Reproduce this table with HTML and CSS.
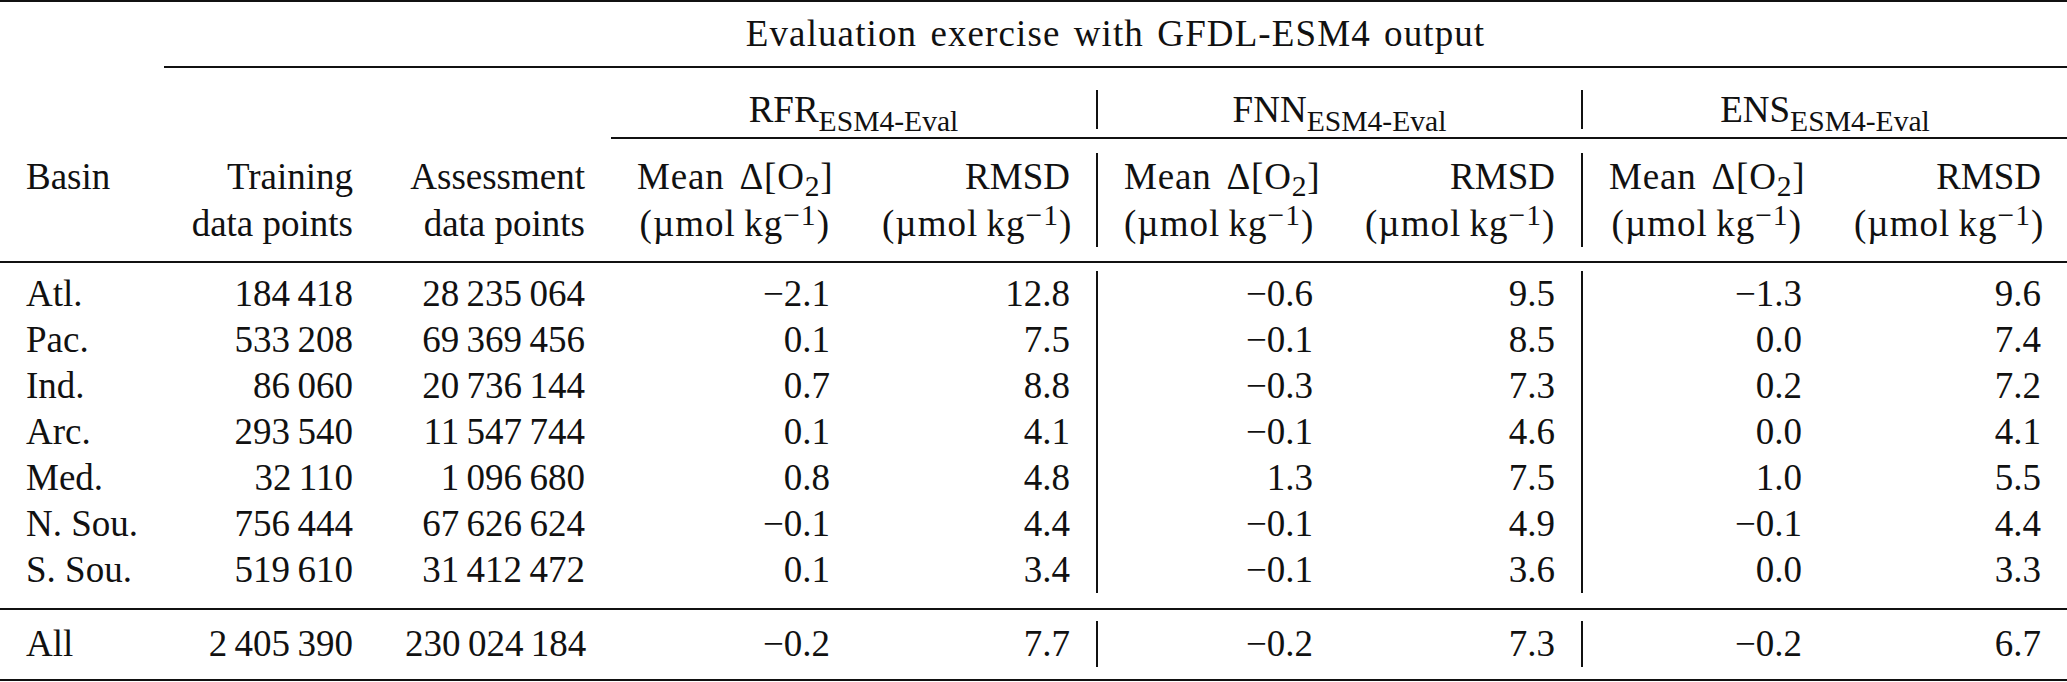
FILE: index.html
```html
<!DOCTYPE html>
<html lang="en">
<head>
<meta charset="utf-8">
<title>Evaluation exercise with GFDL-ESM4 output</title>
<link rel="stylesheet" href="styles.css">
</head>
<body>
<table class="tbl">
  <colgroup>
    <col class="c1"><col class="c2"><col class="c3"><col class="c4"><col class="c5"><col class="c6"><col class="c7"><col class="c8"><col class="c9">
  </colgroup>
  <tbody>
    <tr class="titlerow">
      <td class="top"></td>
      <td colspan="8" class="title top rule">Evaluation exercise with GFDL-ESM4 output</td>
    </tr>
    <tr class="sp"><td colspan="9"><div class="g22"></div></td></tr>
    <tr class="models">
      <td colspan="3"></td>
      <td colspan="2" class="model">RFR<sub>ESM4-Eval</sub></td>
      <td colspan="2" class="model sep">FNN<sub>ESM4-Eval</sub></td>
      <td colspan="2" class="model sep">ENS<sub>ESM4-Eval</sub></td>
    </tr>
    <tr class="sp"><td colspan="3"><div class="g8"></div></td><td colspan="6" class="rule"><div class="g8"></div></td></tr>
    <tr class="sp"><td colspan="9"><div class="g14"></div></td></tr>
    <tr class="head">
      <td class="l">Basin</td>
      <td>Training<br>data points</td>
      <td>Assessment<br>data points</td>
      <td><span class="m">Mean Δ[O<sub>2</sub>]</span><br><span class="u">(µmol&#8201;kg<sup>−1</sup>)</span></td>
      <td>RMSD<br><span class="u">(µmol&#8201;kg<sup>−1</sup>)</span></td>
      <td class="sep"><span class="m">Mean Δ[O<sub>2</sub>]</span><br><span class="u">(µmol&#8201;kg<sup>−1</sup>)</span></td>
      <td>RMSD<br><span class="u">(µmol&#8201;kg<sup>−1</sup>)</span></td>
      <td class="sep"><span class="m">Mean Δ[O<sub>2</sub>]</span><br><span class="u">(µmol&#8201;kg<sup>−1</sup>)</span></td>
      <td>RMSD<br><span class="u">(µmol&#8201;kg<sup>−1</sup>)</span></td>
    </tr>
    <tr class="sp"><td colspan="9" class="rule"><div class="g14"></div></td></tr>
    <tr class="sp"><td colspan="9"><div class="g8"></div></td></tr>
    <tr class="row">
      <td class="l">Atl.</td><td>184&#8201;418</td><td>28&#8201;235&#8201;064</td>
      <td>−2.1</td><td>12.8</td><td class="sep">−0.6</td><td>9.5</td><td class="sep">−1.3</td><td>9.6</td>
    </tr>
    <tr class="row">
      <td class="l">Pac.</td><td>533&#8201;208</td><td>69&#8201;369&#8201;456</td>
      <td>0.1</td><td>7.5</td><td class="sep">−0.1</td><td>8.5</td><td class="sep">0.0</td><td>7.4</td>
    </tr>
    <tr class="row">
      <td class="l">Ind.</td><td>86&#8201;060</td><td>20&#8201;736&#8201;144</td>
      <td>0.7</td><td>8.8</td><td class="sep">−0.3</td><td>7.3</td><td class="sep">0.2</td><td>7.2</td>
    </tr>
    <tr class="row">
      <td class="l">Arc.</td><td>293&#8201;540</td><td>11&#8201;547&#8201;744</td>
      <td>0.1</td><td>4.1</td><td class="sep">−0.1</td><td>4.6</td><td class="sep">0.0</td><td>4.1</td>
    </tr>
    <tr class="row">
      <td class="l">Med.</td><td>32&#8201;110</td><td>1&#8201;096&#8201;680</td>
      <td>0.8</td><td>4.8</td><td class="sep">1.3</td><td>7.5</td><td class="sep">1.0</td><td>5.5</td>
    </tr>
    <tr class="row">
      <td class="l">N. Sou.</td><td>756&#8201;444</td><td>67&#8201;626&#8201;624</td>
      <td>−0.1</td><td>4.4</td><td class="sep">−0.1</td><td>4.9</td><td class="sep">−0.1</td><td>4.4</td>
    </tr>
    <tr class="row">
      <td class="l">S. Sou.</td><td>519&#8201;610</td><td>31&#8201;412&#8201;472</td>
      <td>0.1</td><td>3.4</td><td class="sep">−0.1</td><td>3.6</td><td class="sep">0.0</td><td>3.3</td>
    </tr>
    <tr class="sp"><td colspan="9" class="rule"><div class="g15"></div></td></tr>
    <tr class="sp"><td colspan="9"><div class="g11"></div></td></tr>
    <tr class="row">
      <td class="l">All</td><td>2&#8201;405&#8201;390</td><td>230&#8201;024&#8201;184</td>
      <td>−0.2</td><td>7.7</td><td class="sep">−0.2</td><td>7.3</td><td class="sep">−0.2</td><td>6.7</td>
    </tr>
    <tr class="sp"><td colspan="9" class="rule"><div class="g12"></div></td></tr>
  </tbody>
</table>
</body>
</html>
```

FILE: styles.css
```css
html, body {
  margin: 0;
  padding: 0;
  background: #ffffff;
}

body {
  font-family: "Liberation Serif", "Times New Roman", serif;
  font-size: 37px;
  color: #111111;
}

.tbl {
  width: 2067px;
  table-layout: fixed;
  border-collapse: separate;
  border-spacing: 0;
}

.c1 { width: 164px; }
.c2 { width: 215px; }
.c3 { width: 232px; }
.c4 { width: 245px; }
.c5 { width: 240px; }
.c6 { width: 243px; }
.c7 { width: 242px; }
.c8 { width: 247px; }
.c9 { width: 239px; }

.tbl td {
  padding: 0 26px;
  white-space: nowrap;
  text-align: right;
  vertical-align: top;
}

.tbl td.l {
  text-align: left;
}

.tbl .sp td {
  padding: 0;
}

.g8 { height: 8px; }
.g11 { height: 11px; }
.g12 { height: 12px; }
.g14 { height: 14px; }
.g15 { height: 15px; }
.g22 { height: 22px; }

.top {
  border-top: 2px solid #111111;
}

.rule {
  border-bottom: 2px solid #111111;
}

.sep {
  border-left: 2px solid #111111;
}

.titlerow td {
  line-height: 64px;
}

.tbl td.title {
  text-align: center;
  letter-spacing: 1.1px;
  word-spacing: 3px;
}

.models td {
  line-height: 39px;
}

.tbl td.model {
  text-align: center;
}

.head td {
  line-height: 47px;
}

.m {
  letter-spacing: 0.8px;
  word-spacing: 5px;
}

.u {
  letter-spacing: 1px;
}

.row td {
  line-height: 46px;
}

sub, sup {
  font-size: 0.8em;
  line-height: 0;
}

sub {
  vertical-align: -0.3em;
}

.m sub {
  vertical-align: -0.22em;
}

sup {
  vertical-align: 0.38em;
}
```
